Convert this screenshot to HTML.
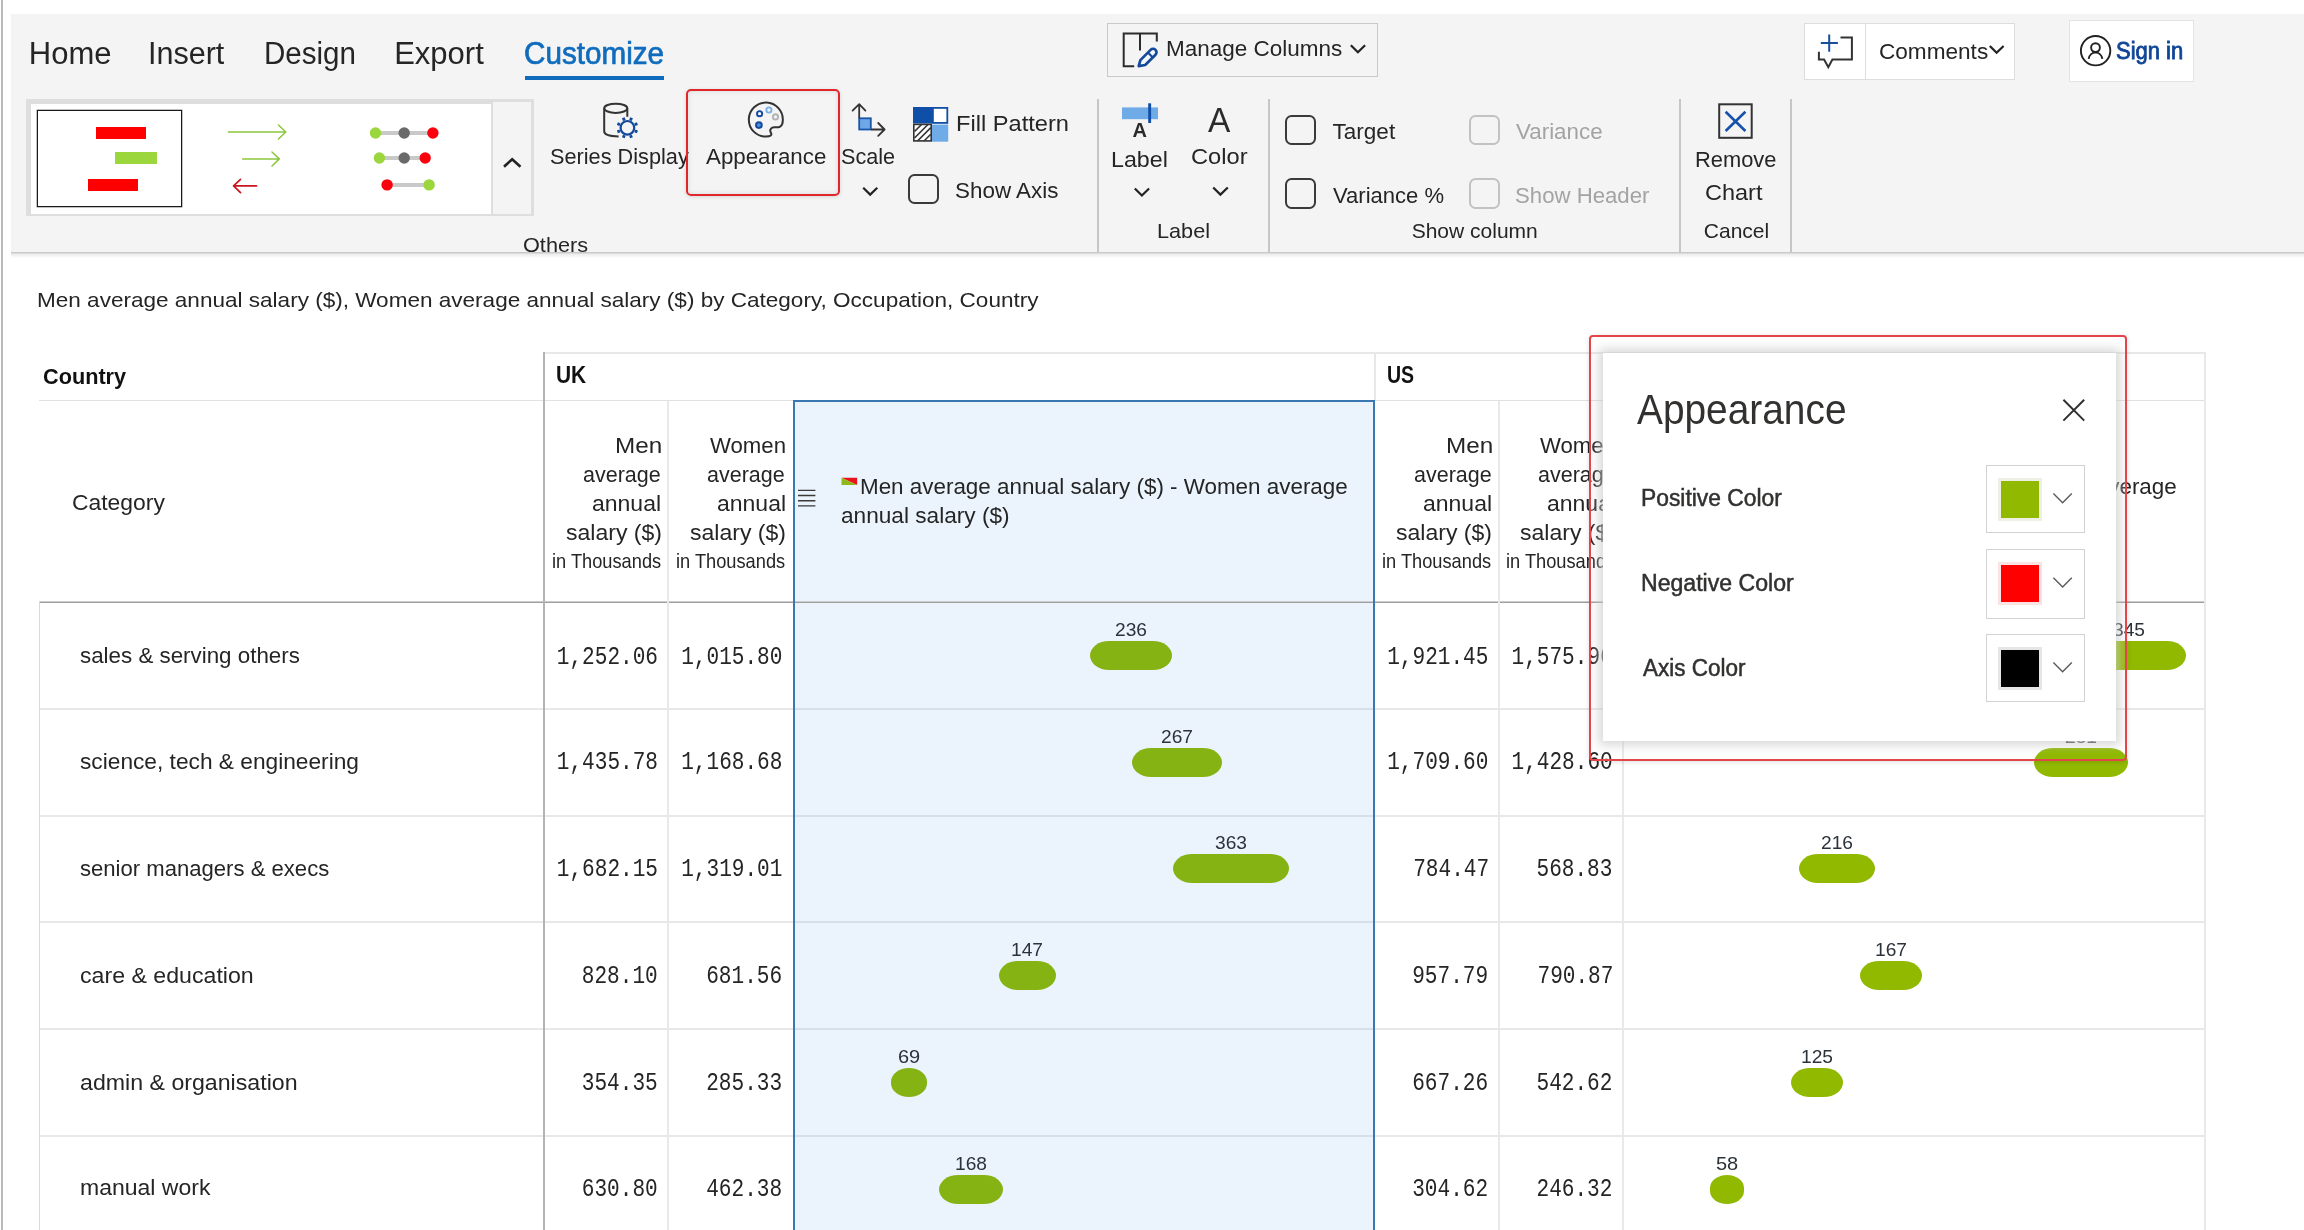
<!DOCTYPE html>
<html lang="en">
<head>
<meta charset="utf-8">
<title>Appearance</title>
<style>
html,body{margin:0;padding:0;}
body{width:2304px;height:1230px;overflow:hidden;background:#fff;position:relative;font-family:"Liberation Sans",sans-serif;color:#252525;}
.a{position:absolute;}
.t{position:absolute;white-space:nowrap;display:block;}
#table,#ribbon,#panelwrap{will-change:transform;}
.bar{position:absolute;border-radius:19px / 14.5px;}
.ln{position:absolute;background:#e2e2e2;}
.cb{position:absolute;width:27.2px;height:26.8px;border:2px solid #3a3a3a;border-radius:6.5px;background:#f4f4f4;}
.cb.dis{border:2px solid #c2c2c2;width:27.2px;height:26.8px;background:#f4f4f4;}
.sep{position:absolute;width:2px;background:#c6c6c6;top:99px;height:153px;}
svg{position:absolute;left:0;top:0;overflow:visible;}
</style>
</head>
<body>

<!-- page left edge line -->
<div class="a" style="left:1px;top:0;width:1.5px;height:1230px;background:#b9b9b9"></div>

<!-- ribbon background -->
<div id="ribbonbg">
  <div class="a" style="left:11px;top:252.3px;width:2293px;height:6px;background:linear-gradient(rgba(0,0,0,0.25),rgba(0,0,0,0.07) 40%,rgba(0,0,0,0))"></div>
  <div class="a" style="left:11px;top:13.5px;width:2293px;height:238.5px;background:#f4f4f4"></div>
  <!-- manage columns button -->
  <div class="a" style="left:1106.8px;top:22.8px;width:269.6px;height:52.2px;border:1.6px solid #c9c9c9;"></div>
  <!-- comments button -->
  <div class="a" style="left:1804.4px;top:22.8px;width:208.6px;height:55.2px;border:1.6px solid #dddddd;background:#fff"></div>
  <div class="a" style="left:1864.6px;top:23.6px;width:1.5px;height:55.2px;background:#dddddd"></div>
  <!-- sign in button -->
  <div class="a" style="left:2069.4px;top:20.2px;width:122.2px;height:59.4px;border:1.6px solid #e3e3e3;background:#fff"></div>
</div>

<!-- ===================== TABLE ===================== -->
<div id="table">
  <!-- selected column background -->
  <div class="a" style="left:794px;top:401px;width:580.5px;height:840px;background:#ebf3fc"></div>

  <!-- horizontal lines -->
  <div class="ln" style="left:544px;top:351.6px;width:1662px;height:2px;background:#e8e8e8"></div>
  <div class="ln" style="left:1373.8px;top:352px;width:1.8px;height:48px;background:#e8e8e8"></div>
  <div class="ln" style="left:38.5px;top:399.7px;width:2167.5px;height:1.6px;background:#e1e1e1"></div>
  <div class="ln" style="left:39px;top:601px;width:2166.5px;height:2px;background:linear-gradient(#cdcdcd 50%,#9e9e9e 50%)"></div>
  <div class="ln" style="left:39px;top:708.4px;width:2166.5px;height:2px;background:#e8e8e8"></div>
  <div class="ln" style="left:39px;top:815px;width:2166.5px;height:2px;background:#e8e8e8"></div>
  <div class="ln" style="left:39px;top:920.8px;width:2166.5px;height:2px;background:#e8e8e8"></div>
  <div class="ln" style="left:39px;top:1027.8px;width:2166.5px;height:2px;background:#e8e8e8"></div>
  <div class="ln" style="left:39px;top:1135px;width:2166.5px;height:2px;background:#e8e8e8"></div>
  <!-- row lines inside selected col (bluish) -->
  <div class="ln" style="left:794px;top:708.4px;width:581px;height:2px;background:#d6e0ea"></div>
  <div class="ln" style="left:794px;top:815px;width:581px;height:2px;background:#d6e0ea"></div>
  <div class="ln" style="left:794px;top:920.8px;width:581px;height:2px;background:#d6e0ea"></div>
  <div class="ln" style="left:794px;top:1027.8px;width:581px;height:2px;background:#d6e0ea"></div>
  <div class="ln" style="left:794px;top:1135px;width:581px;height:2px;background:#d6e0ea"></div>

  <!-- vertical lines -->
  <div class="ln" style="left:39px;top:601px;width:1.2px;height:640px;background:#d9d9d9"></div>
  <div class="ln" style="left:543px;top:352px;width:2px;height:890px;background:#b4b4b4"></div>
  <div class="ln" style="left:667.4px;top:401px;width:2px;height:840px;background:#e9e9e9"></div>
  <div class="ln" style="left:1497.6px;top:401px;width:2px;height:840px;background:#e9e9e9"></div>
  <div class="ln" style="left:1621.8px;top:401px;width:2px;height:840px;background:#e9e9e9"></div>
  <div class="ln" style="left:2204.2px;top:352px;width:2px;height:890px;background:#e9e9e9"></div>
  <!-- selected column blue border -->
  <div class="a" style="left:793.2px;top:400px;width:578.2px;height:850px;border:2px solid #3a78b4;border-bottom:none;box-sizing:content-box"></div>

  <!-- hamburger + flag icons -->
  <svg width="2304" height="1230" viewBox="0 0 2304 1230">
    <g stroke="#3a3a3a" stroke-width="1.35">
      <path d="M798 490.3H815.4M798 495.5H815.4M798 500.7H815.4M798 505.9H815.4"/>
    </g>
    <path d="M841.5 477.8H857.1V485.1Z" fill="#e8141c"/>
    <path d="M841.5 477.8L857.1 485.1H841.5Z" fill="#8fb81c"/>
  </svg>

<div class="bar" style="left:1090.3px;top:640.88px;width:82.0px;height:29.0px;background:#86b314"></div>
<div class="bar" style="left:1131.9px;top:747.62px;width:90.4px;height:29.0px;background:#86b314"></div>
<div class="bar" style="left:1173.3px;top:854.38px;width:116.2px;height:29.0px;background:#86b314"></div>
<div class="bar" style="left:998.9px;top:961.12px;width:57.2px;height:29.0px;background:#86b314"></div>
<div class="bar" style="left:890.8px;top:1067.88px;width:35.9px;height:29.0px;background:#86b314"></div>
<div class="bar" style="left:939.0px;top:1174.62px;width:63.5px;height:29.0px;background:#86b314"></div>
<div class="bar" style="left:2073.0px;top:640.88px;width:113.2px;height:29.0px;background:#90b900"></div>
<div class="bar" style="left:2034.0px;top:747.62px;width:94.0px;height:29.0px;background:#90b900"></div>
<div class="bar" style="left:1798.9px;top:854.38px;width:75.8px;height:29.0px;background:#90b900"></div>
<div class="bar" style="left:1859.6px;top:961.12px;width:62.5px;height:29.0px;background:#90b900"></div>
<div class="bar" style="left:1791.4px;top:1067.88px;width:51.5px;height:29.0px;background:#90b900"></div>
<div class="bar" style="left:1710.4px;top:1174.62px;width:33.6px;height:29.0px;background:#90b900"></div>
<span class="t" style="left:28.79px;top:38.00px;font:normal 31px/1 'Liberation Sans', sans-serif;color:#252525;">Home</span>
<span class="t" style="left:148.35px;top:38.00px;font:normal 31px/1 'Liberation Sans', sans-serif;color:#252525;transform:scale(0.9840,1.0000);transform-origin:0 26.00px;">Insert</span>
<span class="t" style="left:264.44px;top:38.00px;font:normal 31px/1 'Liberation Sans', sans-serif;color:#252525;transform:scale(0.9533,1.0000);transform-origin:0 26.00px;">Design</span>
<span class="t" style="left:394.20px;top:38.00px;font:normal 31px/1 'Liberation Sans', sans-serif;color:#252525;">Export</span>
<span class="t" style="left:524.34px;top:38.00px;font:normal 31px/1 'Liberation Sans', sans-serif;-webkit-text-stroke:0.7px currentColor;color:#0f6cbd;transform:scale(0.9566,1.0000);transform-origin:0 26.00px;">Customize</span>
<span class="t" style="left:550.03px;top:146.00px;font:normal 22.5px/1 'Liberation Sans', sans-serif;color:#252525;transform:scale(0.9650,1.0000);transform-origin:0 18.00px;">Series Display</span>
<span class="t" style="left:706.00px;top:146.00px;font:normal 22.5px/1 'Liberation Sans', sans-serif;color:#252525;transform:scale(0.9917,1.0000);transform-origin:0 18.00px;">Appearance</span>
<span class="t" style="left:841.44px;top:146.00px;font:normal 22.5px/1 'Liberation Sans', sans-serif;color:#252525;transform:scale(0.9611,1.0000);transform-origin:0 18.00px;">Scale</span>
<span class="t" style="left:955.90px;top:113.00px;font:normal 22.5px/1 'Liberation Sans', sans-serif;color:#252525;transform:scale(1.0510,1.0000);transform-origin:0 18.00px;">Fill Pattern</span>
<span class="t" style="left:954.80px;top:180.00px;font:normal 22.5px/1 'Liberation Sans', sans-serif;color:#252525;transform:scale(0.9961,1.0000);transform-origin:0 18.00px;">Show Axis</span>
<div style="position:absolute;left:0;top:0;width:2304px;height:252.5px;overflow:hidden"><span class="t" style="left:522.97px;top:234.00px;font:normal 21px/1 'Liberation Sans', sans-serif;color:#252525;transform:scale(1.0328,1.0000);transform-origin:0 18.00px;">Others</span></div>
<span class="t" style="left:1111.23px;top:149.00px;font:normal 22.5px/1 'Liberation Sans', sans-serif;color:#252525;transform:scale(1.0327,1.0000);transform-origin:0 18.00px;">Label</span>
<span class="t" style="left:1190.65px;top:146.00px;font:normal 22.5px/1 'Liberation Sans', sans-serif;color:#252525;transform:scale(1.0519,1.0000);transform-origin:0 18.00px;">Color</span>
<span class="t" style="left:1156.94px;top:220.00px;font:normal 21px/1 'Liberation Sans', sans-serif;color:#252525;transform:scale(1.0312,1.0000);transform-origin:0 18.00px;">Label</span>
<span class="t" style="left:1332.60px;top:121.00px;font:normal 22.5px/1 'Liberation Sans', sans-serif;color:#252525;">Target</span>
<span class="t" style="left:1332.60px;top:185.00px;font:normal 22.5px/1 'Liberation Sans', sans-serif;color:#252525;transform:scale(0.9796,1.0000);transform-origin:0 18.00px;">Variance %</span>
<span class="t" style="left:1515.70px;top:121.00px;font:normal 22.5px/1 'Liberation Sans', sans-serif;color:#a3a3a3;transform:scale(0.9942,1.0000);transform-origin:0 18.00px;">Variance</span>
<span class="t" style="left:1514.71px;top:185.00px;font:normal 22.5px/1 'Liberation Sans', sans-serif;color:#a3a3a3;transform:scale(0.9859,1.0000);transform-origin:0 18.00px;">Show Header</span>
<span class="t" style="left:1411.70px;top:220.00px;font:normal 21px/1 'Liberation Sans', sans-serif;color:#252525;">Show column</span>
<span class="t" style="left:1694.86px;top:149.00px;font:normal 22.5px/1 'Liberation Sans', sans-serif;color:#252525;transform:scale(0.9716,1.0000);transform-origin:0 18.00px;">Remove</span>
<span class="t" style="left:1704.96px;top:182.00px;font:normal 22.5px/1 'Liberation Sans', sans-serif;color:#252525;transform:scale(1.0444,1.0000);transform-origin:0 18.00px;">Chart</span>
<span class="t" style="left:1703.80px;top:220.00px;font:normal 21px/1 'Liberation Sans', sans-serif;color:#252525;">Cancel</span>
<span class="t" style="left:1166.00px;top:38.00px;font:normal 22.5px/1 'Liberation Sans', sans-serif;color:#252525;">Manage Columns</span>
<span class="t" style="left:1879.00px;top:41.00px;font:normal 22.5px/1 'Liberation Sans', sans-serif;color:#252525;transform:scale(1.0037,1.0000);transform-origin:0 18.00px;">Comments</span>
<span class="t" style="left:2115.64px;top:40.00px;font:normal 23px/1 'Liberation Sans', sans-serif;-webkit-text-stroke:0.8px currentColor;color:#0f4596;transform:scale(0.9559,1.0000);transform-origin:0 19.00px;">Sign in</span>
<span class="t" style="left:37.05px;top:289.00px;font:normal 21px/1 'Liberation Sans', sans-serif;color:#252525;transform:scale(1.0734,1.0000);transform-origin:0 18.00px;">Men average annual salary ($), Women average annual salary ($) by Category, Occupation, Country</span>
<span class="t" style="left:43.11px;top:366.00px;font:bold 22px/1 'Liberation Sans', sans-serif;color:#111;transform:scale(0.9855,1.0000);transform-origin:0 18.00px;">Country</span>
<span class="t" style="left:555.61px;top:364.00px;font:bold 23.5px/1 'Liberation Sans', sans-serif;color:#111;transform:scale(0.8906,1.0000);transform-origin:0 19.00px;">UK</span>
<span class="t" style="left:1386.77px;top:364.00px;font:bold 23.5px/1 'Liberation Sans', sans-serif;color:#111;transform:scale(0.8323,1.0000);transform-origin:0 19.00px;">US</span>
<span class="t" style="left:72.46px;top:492.00px;font:normal 22px/1 'Liberation Sans', sans-serif;color:#252525;transform:scale(1.0398,1.0000);transform-origin:0 18.00px;">Category</span>
<span class="t" style="left:615.19px;top:435.00px;font:normal 22px/1 'Liberation Sans', sans-serif;color:#252525;transform:scale(1.1026,1.0000);transform-origin:0 18.00px;">Men</span>
<span class="t" style="left:583.22px;top:464.00px;font:normal 22px/1 'Liberation Sans', sans-serif;color:#252525;transform:scale(0.9769,1.0000);transform-origin:0 18.00px;">average</span>
<span class="t" style="left:592.45px;top:493.00px;font:normal 22px/1 'Liberation Sans', sans-serif;color:#252525;transform:scale(1.0453,1.0000);transform-origin:0 18.00px;">annual</span>
<span class="t" style="left:565.65px;top:522.00px;font:normal 22px/1 'Liberation Sans', sans-serif;color:#252525;transform:scale(1.0461,1.0000);transform-origin:0 18.00px;">salary ($)</span>
<span class="t" style="left:551.60px;top:551.00px;font:normal 20.3px/1 'Liberation Sans', sans-serif;color:#252525;transform:scale(0.8992,1.0000);transform-origin:0 17.00px;">in Thousands</span>
<span class="t" style="left:710.00px;top:435.00px;font:normal 22px/1 'Liberation Sans', sans-serif;color:#252525;transform:scale(1.0081,1.0000);transform-origin:0 18.00px;">Women</span>
<span class="t" style="left:707.42px;top:464.00px;font:normal 22px/1 'Liberation Sans', sans-serif;color:#252525;transform:scale(0.9769,1.0000);transform-origin:0 18.00px;">average</span>
<span class="t" style="left:716.65px;top:493.00px;font:normal 22px/1 'Liberation Sans', sans-serif;color:#252525;transform:scale(1.0453,1.0000);transform-origin:0 18.00px;">annual</span>
<span class="t" style="left:689.85px;top:522.00px;font:normal 22px/1 'Liberation Sans', sans-serif;color:#252525;transform:scale(1.0461,1.0000);transform-origin:0 18.00px;">salary ($)</span>
<span class="t" style="left:675.80px;top:551.00px;font:normal 20.3px/1 'Liberation Sans', sans-serif;color:#252525;transform:scale(0.8992,1.0000);transform-origin:0 17.00px;">in Thousands</span>
<span class="t" style="left:1445.59px;top:435.00px;font:normal 22px/1 'Liberation Sans', sans-serif;color:#252525;transform:scale(1.1026,1.0000);transform-origin:0 18.00px;">Men</span>
<span class="t" style="left:1413.62px;top:464.00px;font:normal 22px/1 'Liberation Sans', sans-serif;color:#252525;transform:scale(0.9769,1.0000);transform-origin:0 18.00px;">average</span>
<span class="t" style="left:1422.85px;top:493.00px;font:normal 22px/1 'Liberation Sans', sans-serif;color:#252525;transform:scale(1.0453,1.0000);transform-origin:0 18.00px;">annual</span>
<span class="t" style="left:1396.05px;top:522.00px;font:normal 22px/1 'Liberation Sans', sans-serif;color:#252525;transform:scale(1.0461,1.0000);transform-origin:0 18.00px;">salary ($)</span>
<span class="t" style="left:1382.00px;top:551.00px;font:normal 20.3px/1 'Liberation Sans', sans-serif;color:#252525;transform:scale(0.8992,1.0000);transform-origin:0 17.00px;">in Thousands</span>
<div style="position:absolute;left:0;top:0;width:1603.5px;height:1230px;overflow:hidden"><span class="t" style="left:1540.40px;top:435.00px;font:normal 22px/1 'Liberation Sans', sans-serif;color:#252525;transform:scale(1.0081,1.0000);transform-origin:0 18.00px;">Women</span></div>
<div style="position:absolute;left:0;top:0;width:1603.5px;height:1230px;overflow:hidden"><span class="t" style="left:1537.82px;top:464.00px;font:normal 22px/1 'Liberation Sans', sans-serif;color:#252525;transform:scale(0.9769,1.0000);transform-origin:0 18.00px;">average</span></div>
<div style="position:absolute;left:0;top:0;width:1603.5px;height:1230px;overflow:hidden"><span class="t" style="left:1547.05px;top:493.00px;font:normal 22px/1 'Liberation Sans', sans-serif;color:#252525;transform:scale(1.0453,1.0000);transform-origin:0 18.00px;">annual</span></div>
<div style="position:absolute;left:0;top:0;width:1603.5px;height:1230px;overflow:hidden"><span class="t" style="left:1520.25px;top:522.00px;font:normal 22px/1 'Liberation Sans', sans-serif;color:#252525;transform:scale(1.0461,1.0000);transform-origin:0 18.00px;">salary ($)</span></div>
<div style="position:absolute;left:0;top:0;width:1603.5px;height:1230px;overflow:hidden"><span class="t" style="left:1506.20px;top:551.00px;font:normal 20.3px/1 'Liberation Sans', sans-serif;color:#252525;transform:scale(0.8992,1.0000);transform-origin:0 17.00px;">in Thousands</span></div>
<span class="t" style="left:860.26px;top:476.00px;font:normal 22px/1 'Liberation Sans', sans-serif;color:#252525;transform:scale(1.0183,1.0000);transform-origin:0 18.00px;">Men average annual salary ($) - Women average</span>
<span class="t" style="left:841.07px;top:505.00px;font:normal 22px/1 'Liberation Sans', sans-serif;color:#252525;transform:scale(1.0290,1.0000);transform-origin:0 18.00px;">annual salary ($)</span>
<span class="t" style="left:1689.26px;top:476.00px;font:normal 22px/1 'Liberation Sans', sans-serif;color:#252525;transform:scale(1.0183,1.0000);transform-origin:0 18.00px;">Men average annual salary ($) - Women average</span>
<span class="t" style="left:1670.07px;top:505.00px;font:normal 22px/1 'Liberation Sans', sans-serif;color:#252525;transform:scale(1.0290,1.0000);transform-origin:0 18.00px;">annual salary ($)</span>
<span class="t" style="left:79.78px;top:645.00px;font:normal 22px/1 'Liberation Sans', sans-serif;color:#252525;transform:scale(1.0158,1.0000);transform-origin:0 18.00px;">sales &amp; serving others</span>
<span class="t" style="left:79.77px;top:751.00px;font:normal 22px/1 'Liberation Sans', sans-serif;color:#252525;transform:scale(1.0321,1.0000);transform-origin:0 18.00px;">science, tech &amp; engineering</span>
<span class="t" style="left:79.80px;top:858.00px;font:normal 22px/1 'Liberation Sans', sans-serif;color:#252525;transform:scale(1.0040,1.0000);transform-origin:0 18.00px;">senior managers &amp; execs</span>
<span class="t" style="left:79.75px;top:965.00px;font:normal 22px/1 'Liberation Sans', sans-serif;color:#252525;transform:scale(1.0521,1.0000);transform-origin:0 18.00px;">care &amp; education</span>
<span class="t" style="left:79.75px;top:1072.00px;font:normal 22px/1 'Liberation Sans', sans-serif;color:#252525;transform:scale(1.0525,1.0000);transform-origin:0 18.00px;">admin &amp; organisation</span>
<span class="t" style="left:79.75px;top:1177.00px;font:normal 22px/1 'Liberation Sans', sans-serif;color:#252525;transform:scale(1.0460,1.0000);transform-origin:0 18.00px;">manual work</span>
<span class="t" style="left:556.80px;top:648.00px;font:normal 21.08px/1 'Liberation Mono', monospace;color:#252525;transform:scale(1.0000,1.1900);transform-origin:0 16.00px;">1,252.06</span>
<span class="t" style="left:681.20px;top:648.00px;font:normal 21.08px/1 'Liberation Mono', monospace;color:#252525;transform:scale(1.0000,1.1900);transform-origin:0 16.00px;">1,015.80</span>
<span class="t" style="left:1387.20px;top:648.00px;font:normal 21.08px/1 'Liberation Mono', monospace;color:#252525;transform:scale(1.0000,1.1900);transform-origin:0 16.00px;">1,921.45</span>
<span class="t" style="left:1511.50px;top:648.00px;font:normal 21.08px/1 'Liberation Mono', monospace;color:#252525;transform:scale(1.0000,1.1900);transform-origin:0 16.00px;">1,575.96</span>
<span class="t" style="left:556.80px;top:753.00px;font:normal 21.08px/1 'Liberation Mono', monospace;color:#252525;transform:scale(1.0000,1.1900);transform-origin:0 16.00px;">1,435.78</span>
<span class="t" style="left:681.20px;top:753.00px;font:normal 21.08px/1 'Liberation Mono', monospace;color:#252525;transform:scale(1.0000,1.1900);transform-origin:0 16.00px;">1,168.68</span>
<span class="t" style="left:1387.20px;top:753.00px;font:normal 21.08px/1 'Liberation Mono', monospace;color:#252525;transform:scale(1.0000,1.1900);transform-origin:0 16.00px;">1,709.60</span>
<span class="t" style="left:1511.50px;top:753.00px;font:normal 21.08px/1 'Liberation Mono', monospace;color:#252525;transform:scale(1.0000,1.1900);transform-origin:0 16.00px;">1,428.60</span>
<span class="t" style="left:556.80px;top:860.00px;font:normal 21.08px/1 'Liberation Mono', monospace;color:#252525;transform:scale(1.0000,1.1900);transform-origin:0 16.00px;">1,682.15</span>
<span class="t" style="left:681.20px;top:860.00px;font:normal 21.08px/1 'Liberation Mono', monospace;color:#252525;transform:scale(1.0000,1.1900);transform-origin:0 16.00px;">1,319.01</span>
<span class="t" style="left:1413.20px;top:860.00px;font:normal 21.08px/1 'Liberation Mono', monospace;color:#252525;transform:scale(1.0000,1.1900);transform-origin:0 16.00px;">784.47</span>
<span class="t" style="left:1536.50px;top:860.00px;font:normal 21.08px/1 'Liberation Mono', monospace;color:#252525;transform:scale(1.0000,1.1900);transform-origin:0 16.00px;">568.83</span>
<span class="t" style="left:581.80px;top:967.00px;font:normal 21.08px/1 'Liberation Mono', monospace;color:#252525;transform:scale(1.0000,1.1900);transform-origin:0 16.00px;">828.10</span>
<span class="t" style="left:706.20px;top:967.00px;font:normal 21.08px/1 'Liberation Mono', monospace;color:#252525;transform:scale(1.0000,1.1900);transform-origin:0 16.00px;">681.56</span>
<span class="t" style="left:1412.20px;top:967.00px;font:normal 21.08px/1 'Liberation Mono', monospace;color:#252525;transform:scale(1.0000,1.1900);transform-origin:0 16.00px;">957.79</span>
<span class="t" style="left:1537.50px;top:967.00px;font:normal 21.08px/1 'Liberation Mono', monospace;color:#252525;transform:scale(1.0000,1.1900);transform-origin:0 16.00px;">790.87</span>
<span class="t" style="left:581.80px;top:1074.00px;font:normal 21.08px/1 'Liberation Mono', monospace;color:#252525;transform:scale(1.0000,1.1900);transform-origin:0 16.00px;">354.35</span>
<span class="t" style="left:706.20px;top:1074.00px;font:normal 21.08px/1 'Liberation Mono', monospace;color:#252525;transform:scale(1.0000,1.1900);transform-origin:0 16.00px;">285.33</span>
<span class="t" style="left:1412.20px;top:1074.00px;font:normal 21.08px/1 'Liberation Mono', monospace;color:#252525;transform:scale(1.0000,1.1900);transform-origin:0 16.00px;">667.26</span>
<span class="t" style="left:1536.50px;top:1074.00px;font:normal 21.08px/1 'Liberation Mono', monospace;color:#252525;transform:scale(1.0000,1.1900);transform-origin:0 16.00px;">542.62</span>
<span class="t" style="left:581.80px;top:1180.00px;font:normal 21.08px/1 'Liberation Mono', monospace;color:#252525;transform:scale(1.0000,1.1900);transform-origin:0 16.00px;">630.80</span>
<span class="t" style="left:706.20px;top:1180.00px;font:normal 21.08px/1 'Liberation Mono', monospace;color:#252525;transform:scale(1.0000,1.1900);transform-origin:0 16.00px;">462.38</span>
<span class="t" style="left:1412.20px;top:1180.00px;font:normal 21.08px/1 'Liberation Mono', monospace;color:#252525;transform:scale(1.0000,1.1900);transform-origin:0 16.00px;">304.62</span>
<span class="t" style="left:1536.50px;top:1180.00px;font:normal 21.08px/1 'Liberation Mono', monospace;color:#252525;transform:scale(1.0000,1.1900);transform-origin:0 16.00px;">246.32</span>
<span class="t" style="left:1115.14px;top:620.00px;font:normal 19px/1 'Liberation Sans', sans-serif;color:#2c323a;transform:scale(1.0100,1.0000);transform-origin:0 16.00px;">236</span>
<span class="t" style="left:1160.94px;top:727.00px;font:normal 19px/1 'Liberation Sans', sans-serif;color:#2c323a;transform:scale(1.0100,1.0000);transform-origin:0 16.00px;">267</span>
<span class="t" style="left:1215.24px;top:833.00px;font:normal 19px/1 'Liberation Sans', sans-serif;color:#2c323a;transform:scale(1.0100,1.0000);transform-origin:0 16.00px;">363</span>
<span class="t" style="left:1011.34px;top:940.00px;font:normal 19px/1 'Liberation Sans', sans-serif;color:#2c323a;transform:scale(1.0100,1.0000);transform-origin:0 16.00px;">147</span>
<span class="t" style="left:897.70px;top:1047.00px;font:normal 19px/1 'Liberation Sans', sans-serif;color:#2c323a;transform:scale(1.0526,1.0000);transform-origin:0 16.00px;">69</span>
<span class="t" style="left:954.59px;top:1154.00px;font:normal 19px/1 'Liberation Sans', sans-serif;color:#2c323a;transform:scale(1.0100,1.0000);transform-origin:0 16.00px;">168</span>
<span class="t" style="left:2113.44px;top:620.00px;font:normal 19px/1 'Liberation Sans', sans-serif;color:#2c323a;transform:scale(1.0100,1.0000);transform-origin:0 16.00px;">345</span>
<span class="t" style="left:2064.84px;top:727.00px;font:normal 19px/1 'Liberation Sans', sans-serif;color:#2c323a;transform:scale(1.0100,1.0000);transform-origin:0 16.00px;">281</span>
<span class="t" style="left:1820.64px;top:833.00px;font:normal 19px/1 'Liberation Sans', sans-serif;color:#2c323a;transform:scale(1.0100,1.0000);transform-origin:0 16.00px;">216</span>
<span class="t" style="left:1874.69px;top:940.00px;font:normal 19px/1 'Liberation Sans', sans-serif;color:#2c323a;transform:scale(1.0100,1.0000);transform-origin:0 16.00px;">167</span>
<span class="t" style="left:1800.99px;top:1047.00px;font:normal 19px/1 'Liberation Sans', sans-serif;color:#2c323a;transform:scale(1.0100,1.0000);transform-origin:0 16.00px;">125</span>
<span class="t" style="left:1716.15px;top:1154.00px;font:normal 19px/1 'Liberation Sans', sans-serif;color:#2c323a;transform:scale(1.0526,1.0000);transform-origin:0 16.00px;">58</span>
</div>

<!-- ===================== RIBBON ===================== -->
<div id="ribbon">
  <!-- tab underline -->
  <div class="a" style="left:525px;top:75.5px;width:139px;height:4.4px;background:#0f6cbd"></div>

  <!-- gallery -->
  <div class="a" style="left:26.4px;top:99.1px;width:507.2px;height:117.2px;background:#dedede"></div>
  <div class="a" style="left:30.8px;top:103.5px;width:460.2px;height:110.1px;background:#fff"></div>
  <div class="a" style="left:493.3px;top:101.7px;width:37.7px;height:112px;background:#f4f4f4"></div>
  <div class="a" style="left:37.2px;top:109.9px;width:143.3px;height:94.9px;border:1px solid #1a1a1a;box-shadow:0 0 0 0.5px rgba(30,30,30,0.55)"></div>
  <!-- bars thumb -->
  <div class="a" style="left:95.6px;top:127.3px;width:50.6px;height:11.6px;background:#fe0000"></div>
  <div class="a" style="left:114.7px;top:152.3px;width:42.2px;height:11.5px;background:#9ad63c"></div>
  <div class="a" style="left:88px;top:179.3px;width:50.1px;height:11.5px;background:#fe0000"></div>

  <svg width="2304" height="260" viewBox="0 0 2304 260" fill="none">
    <!-- arrows thumb -->
    <g stroke="#8cc63f" stroke-width="1.5" stroke-linecap="round" stroke-linejoin="round">
      <path d="M228.3 132H285.5M278.5 125L285.8 132L278.5 139"/>
      <path d="M242.6 158.9H279M272 152L279.3 158.9L272 166"/>
    </g>
    <g stroke="#c8161d" stroke-width="1.7" stroke-linecap="round" stroke-linejoin="round">
      <path d="M256.5 185.9H234M240.5 179.3L233.6 185.9L240.5 192.6"/>
    </g>
    <!-- dumbbells thumb -->
    <g stroke="#c9c9c9" stroke-width="4">
      <path d="M375.5 133H432.9M379.4 158H425.2M387.1 184.9H429.1"/>
    </g>
    <circle cx="375.5" cy="133" r="5.7" fill="#9ad63c"/>
    <circle cx="404.2" cy="133" r="5.7" fill="#6a6a6a"/>
    <circle cx="432.9" cy="133" r="5.7" fill="#fb000d"/>
    <circle cx="379.4" cy="158" r="5.7" fill="#9ad63c"/>
    <circle cx="404.2" cy="158" r="5.7" fill="#6a6a6a"/>
    <circle cx="425.2" cy="158" r="5.7" fill="#fb000d"/>
    <circle cx="387.1" cy="184.9" r="5.7" fill="#fb000d"/>
    <circle cx="429.1" cy="184.9" r="5.7" fill="#9ad63c"/>
    <!-- gallery chevron up -->
    <path d="M505 165.8L512.2 159.2L519.5 165.8" stroke="#222" stroke-width="2.6" stroke-linecap="square"/>

    <!-- Series Display icon -->
    <g stroke="#333" stroke-width="2">
      <ellipse cx="615.75" cy="108.3" rx="11.55" ry="4.6"/>
      <path d="M604.2 108.3V131.3C604.2 134.8 610 136.4 618.6 136.4"/>
      <path d="M627.3 108.3V116.8"/>
    </g>
    <g stroke="#134a9a">
      <circle cx="627.4" cy="127.8" r="6.8" stroke-width="2.2" fill="#f4f4f4"/>
      <path d="M634.8 130.9L637.4 131.9M630.5 135.2L631.5 137.8M624.3 135.2L623.3 137.8M620.0 130.9L617.4 131.9M620.0 124.7L617.4 123.7M624.3 120.4L623.3 117.8M630.5 120.4L631.5 117.8M634.8 124.7L637.4 123.7" stroke-width="2.9"/>
    </g>

    <!-- Appearance (palette) icon -->
    <path d="M782.8 120.6C782.8 127.2 778.5 127.6 774.8 127.3C771.2 127 769.2 129.8 770.8 132.5C772.4 135.2 770.6 136.6 766 136.6A17 17 0 1 1 782.8 120.6Z" stroke="#333" stroke-width="2"/>
    <circle cx="759.6" cy="113.7" r="2.6" stroke="#134a9a" stroke-width="1.9"/>
    <circle cx="768.9" cy="110" r="2.6" stroke="#79b0ea" stroke-width="1.9"/>
    <circle cx="775.5" cy="116.9" r="2.6" stroke="#b3b3b3" stroke-width="1.9"/>
    <circle cx="758.9" cy="125.1" r="2.9" fill="#4c8ee0" stroke="#134a9a" stroke-width="1.9"/>

    <!-- Scale icon -->
    <rect x="859.2" y="118.3" width="11.6" height="11.2" fill="#6fa8e6" stroke="#1b55a8" stroke-width="1.8"/>
    <g stroke="#333" stroke-width="1.8" stroke-linecap="round" stroke-linejoin="round">
      <path d="M859.2 117.4V104.6M852.6 110.6L859.2 104.2L865.4 110.6"/>
      <path d="M871.7 129.5H884M878.2 123L884.6 129.5L878.2 135.8"/>
    </g>
    <!-- scale chevron -->
    <path d="M864 188.5L870.2 194.6L876.5 188.5" stroke="#222" stroke-width="2.2" stroke-linecap="square"/>

    <!-- Fill Pattern icon -->
    <rect x="913" y="107" width="19" height="16.5" fill="#0f4fa8"/>
    <rect x="932.9" y="107.9" width="14.4" height="15" fill="#fff" stroke="#0f4fa8" stroke-width="1.8"/>
    <rect x="932" y="124.6" width="16.2" height="17.1" fill="#6fabe6"/>
    <rect x="913.8" y="124.4" width="17.4" height="16.5" fill="#fff" stroke="#333" stroke-width="1.6"/>
    <g stroke="#333" stroke-width="1.6">
      <path d="M914.5 131.5L921.5 124.5M914.5 138L928 124.5M917.5 141L930.8 127.6M924 141L930.8 134.3"/>
    </g>

    <!-- Label icon -->
    <rect x="1122" y="107.4" width="36" height="11.8" fill="#6fabe6"/>
    <rect x="1148.2" y="103.3" width="2.9" height="19.7" fill="#0f4fa8"/>
    <!-- label / color chevrons -->
    <path d="M1135.6 189.3L1141.9 195.5L1148.3 189.3" stroke="#222" stroke-width="2.2" stroke-linecap="square"/>
    <path d="M1214 188.3L1220.4 194.6L1227 188.3" stroke="#222" stroke-width="2.2" stroke-linecap="square"/>

    <!-- Remove chart icon -->
    <rect x="1719.2" y="104.3" width="32.5" height="33.5" stroke="#333" stroke-width="2"/>
    <path d="M1725.6 111.8L1745.4 131M1745.4 111.8L1725.6 131" stroke="#1651aa" stroke-width="2.6"/>

    <!-- Manage columns icon -->
    <g stroke="#2b2b2b" stroke-width="2">
      <path d="M1134.2 66.2H1123.7V33.4H1156.8V41.4"/>
      <path d="M1140 33.4V50.4"/>
    </g>
    <path d="M1138.7 66.1L1140.4 60.1L1150.6 49.9A3.45 3.45 0 0 1 1155.5 54.8L1145.2 65Z" stroke="#134a9a" stroke-width="2.7" stroke-linejoin="round" fill="#f4f7fc"/>
    <path d="M1147.9 52.6L1152.8 57.5" stroke="#134a9a" stroke-width="2.1"/>
    <!-- manage columns chevron -->
    <path d="M1351.6 46L1357.9 52.3L1364.3 46" stroke="#222" stroke-width="2.2" stroke-linecap="square"/>

    <!-- comments icon -->
    <path d="M1820.8 42.9H1837.9M1829.2 34.4V51.7" stroke="#1a4f9c" stroke-width="2"/>
    <path d="M1840.5 37.6H1851.9V59.6H1832.4L1828.3 67.2L1824.1 59.6H1818.9V51.7" stroke="#333" stroke-width="2"/>
    <!-- comments chevron -->
    <path d="M1990.6 46.8L1996.6 52.8L2002.8 46.8" stroke="#222" stroke-width="2.2" stroke-linecap="square"/>

    <!-- sign in icon -->
    <circle cx="2095.6" cy="50.7" r="14.7" stroke="#222" stroke-width="1.9"/>
    <circle cx="2095.5" cy="47.6" r="4.4" stroke="#222" stroke-width="1.9"/>
    <path d="M2088.7 58.9C2089.8 50.4 2101.2 50.4 2102.3 58.9" stroke="#222" stroke-width="1.9"/>
  </svg>

  <!-- label icon A and Color A glyphs -->
  <span class="t" style="left:1132.6px;top:119.6px;font:bold 20px/1 'Liberation Sans',sans-serif;color:#2b2b2b;">A</span>
  <span class="t" style="left:1207.6px;top:103.2px;font:34.5px/1 'Liberation Sans',sans-serif;color:#2b2b2b;transform:scaleX(0.97);transform-origin:0 0">A</span>

  <!-- separators -->
  <div class="sep" style="left:1097.2px"></div>
  <div class="sep" style="left:1267.8px"></div>
  <div class="sep" style="left:1679.4px"></div>
  <div class="sep" style="left:1789.5px"></div>

  <!-- checkboxes -->
  <div class="cb" style="left:908px;top:173.5px"></div>
  <div class="cb" style="left:1285px;top:114.5px"></div>
  <div class="cb" style="left:1285px;top:178px"></div>
  <div class="cb dis" style="left:1468.8px;top:114.5px"></div>
  <div class="cb dis" style="left:1468.8px;top:178px"></div>

  <!-- appearance highlight (red) -->
  <div class="a" style="left:686.4px;top:89.2px;width:150px;height:102.4px;border:2px solid #e0262b;border-radius:5px;box-shadow:inset 0 0 5px rgba(0,0,0,0.12),0 1px 4px rgba(0,0,0,0.12)"></div>


</div>

<!-- ===================== PANEL ===================== -->
<div id="panelwrap">
  <!-- red annotation outline with clipped inner glow -->
  <div class="a" style="left:1589.3px;top:334.8px;width:534.1px;height:422.6px;border:2px solid #e4454a;border-radius:4px;overflow:hidden;box-shadow:0 1px 5px rgba(0,0,0,0.13)">
    <div class="a" style="left:12.2px;top:16.2px;width:512.6px;height:388.4px;background:#fff;box-shadow:0 0 10px 4px rgba(200,200,200,0.72)"></div>
  </div>
  <!-- dropdown boxes -->
  <div class="a" style="left:1985.7px;top:465.3px;width:97.6px;height:66px;border:1.2px solid #d2d2d2;background:#fff"></div>
  <div class="a" style="left:1985.7px;top:549.3px;width:97.6px;height:67.4px;border:1.2px solid #d2d2d2;background:#fff"></div>
  <div class="a" style="left:1985.7px;top:634.4px;width:97.6px;height:66px;border:1.2px solid #d2d2d2;background:#fff"></div>
  <!-- swatches -->
  <div class="a" style="left:1998px;top:477.8px;width:37.6px;height:37.4px;border:3px solid #eef0e4;background:#91b900"></div>
  <div class="a" style="left:1998px;top:562px;width:37.6px;height:37.4px;border:3px solid #fbe3e3;background:#fe0000"></div>
  <div class="a" style="left:1998px;top:646.6px;width:37.6px;height:37.4px;border:3px solid #e6e6e6;background:#000"></div>
  <svg width="2304" height="1230" viewBox="0 0 2304 1230" fill="none">
    <path d="M2063.4 399.8L2084.2 420.6M2084.2 399.8L2063.4 420.6" stroke="#323130" stroke-width="2"/>
    <g stroke="#5a5a5a" stroke-width="1.4">
      <path d="M2053.4 493.6L2062.6 502.8L2071.8 493.6"/>
      <path d="M2053.4 577.8L2062.6 587L2071.8 577.8"/>
      <path d="M2053.4 662.6L2062.6 671.8L2071.8 662.6"/>
    </g>
  </svg>

<span class="t" style="left:1636.90px;top:389.00px;font:normal 42px/1 'Liberation Sans', sans-serif;color:#323130;transform:scale(0.9249,1.0000);transform-origin:0 35.00px;">Appearance</span>
<span class="t" style="left:1641.42px;top:487.00px;font:normal 23px/1 'Liberation Sans', sans-serif;-webkit-text-stroke:0.5px currentColor;color:#323130;transform:scale(0.9921,1.0000);transform-origin:0 19.00px;">Positive Color</span>
<span class="t" style="left:1641.39px;top:572.00px;font:normal 23px/1 'Liberation Sans', sans-serif;-webkit-text-stroke:0.5px currentColor;color:#323130;transform:scale(1.0040,1.0000);transform-origin:0 19.00px;">Negative Color</span>
<span class="t" style="left:1643.40px;top:657.00px;font:normal 23px/1 'Liberation Sans', sans-serif;-webkit-text-stroke:0.5px currentColor;color:#323130;transform:scale(0.9771,1.0000);transform-origin:0 19.00px;">Axis Color</span>
</div>

</body>
</html>
